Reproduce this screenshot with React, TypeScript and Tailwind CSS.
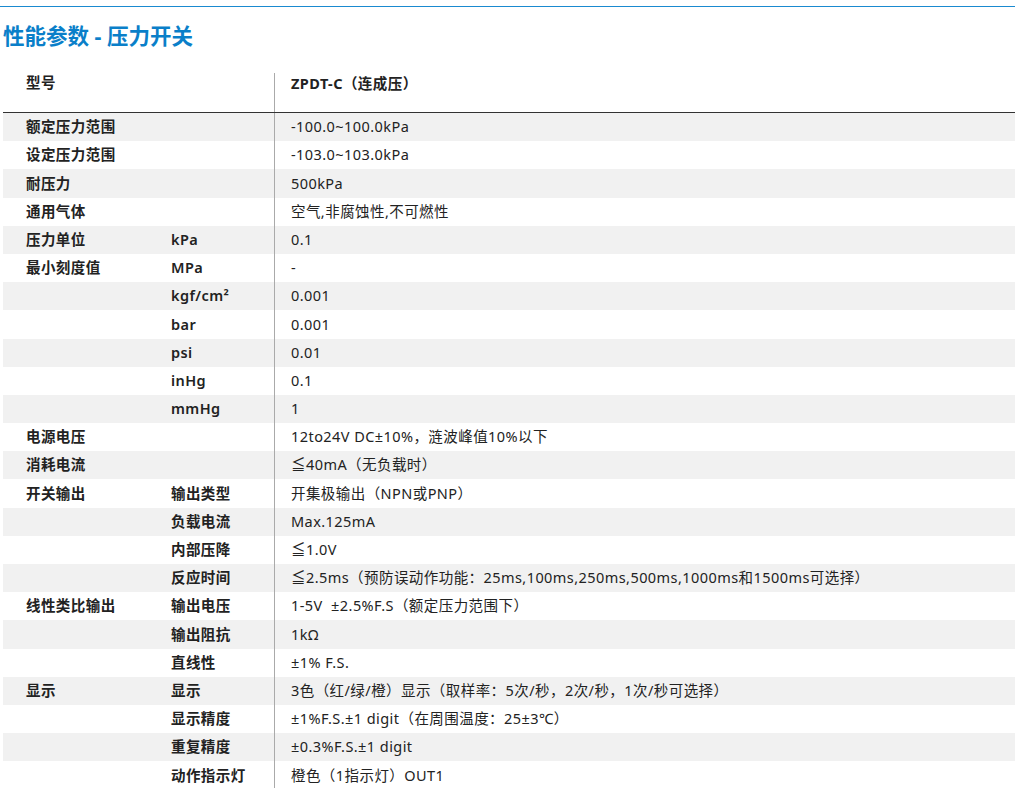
const rows: [string, string, string][] = [
  ["额定压力范围", "", "-100.0~100.0kPa"],
  ["设定压力范围", "", "-103.0~103.0kPa"],
  ["耐压力", "", "500kPa"],
  ["通用气体", "", "空气,非腐蚀性,不可燃性"],
  ["压力单位", "kPa", "0.1"],
  ["最小刻度值", "MPa", "-"],
  ["", "kgf/cm²", "0.001"],
  ["", "bar", "0.001"],
  ["", "psi", "0.01"],
  ["", "inHg", "0.1"],
  ["", "mmHg", "1"],
  ["电源电压", "", "12to24V DC±10%，涟波峰值10%以下"],
  ["消耗电流", "", "≦40mA（无负载时）"],
  ["开关输出", "输出类型", "开集极输出（NPN或PNP）"],
  ["", "负载电流", "Max.125mA"],
  ["", "内部压降", "≦1.0V"],
  ["", "反应时间", "≦2.5ms（预防误动作功能：25ms,100ms,250ms,500ms,1000ms和1500ms可选择）"],
  ["线性类比输出", "输出电压", "1-5V  ±2.5%F.S（额定压力范围下）"],
  ["", "输出阻抗", "1kΩ"],
  ["", "直线性", "±1% F.S."],
  ["显示", "显示", "3色（红/绿/橙）显示（取样率：5次/秒，2次/秒，1次/秒可选择）"],
  ["", "显示精度", "±1%F.S.±1 digit（在周围温度：25±3℃）"],
  ["", "重复精度", "±0.3%F.S.±1 digit"],
  ["", "动作指示灯", "橙色（1指示灯）OUT1"],
];

export default function App() {
  return (
    <div
      className="w-[1018px] h-[788px] overflow-hidden bg-white text-[#222]"
      style={{ fontFamily: '"Noto Sans", "Noto Sans CJK SC", sans-serif' }}
    >
      <div className="mt-[6px] h-px bg-[#1a8ad0] w-[1015px]" />
      <h1 className="mt-[14px] ml-[3px] text-[21.5px] leading-[30px] font-bold text-[#0a7fc9]">性能参数 - 压力开关</h1>
      <div className="mt-[19px] w-[1012px] ml-[3px] text-[14.5px] tracking-[0.03em]">
        <div className="flex h-[43px] border-b-[1.5px] border-[#333]">
          <div className="w-[271px] pl-[23px] pt-[2px] font-bold">型号</div>
          <div className="mt-[3px] border-l border-[#aaa] pl-[16px] font-bold">ZPDT-C（连成压）</div>
        </div>
        {rows.map(([a, b, c], i) => (
          <div key={i} className={`flex h-[28.2px] items-center ${i % 2 === 0 ? "bg-[#f1f1f1]" : "bg-white"}`}>
            <div className="w-[145px] pl-[23px] font-semibold">{a}</div>
            <div className="w-[126px] pl-[23px] font-semibold">{b}</div>
            <div className="h-full flex items-center border-l border-[#aaa] pl-[16px] whitespace-pre">{c}</div>
          </div>
        ))}
      </div>
    </div>
  );
}
